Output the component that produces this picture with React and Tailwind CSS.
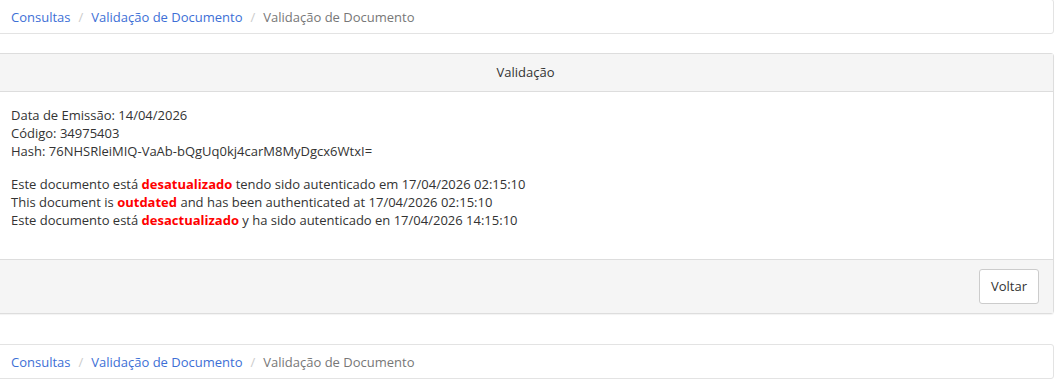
const crumbs = (
  <ol className="flex items-center text-[13px] leading-[18px]">
    <li>
      <a href="#" className="text-[#3d6fd6]">Consultas</a>
    </li>
    <li className="px-[8px] text-[#ccc]">/</li>
    <li>
      <a href="#" className="text-[#3d6fd6]">Validação de Documento</a>
    </li>
    <li className="px-[8px] text-[#ccc]">/</li>
    <li className="text-[#777]">Validação de Documento</li>
  </ol>
);

function Breadcrumb({ className }) {
  return (
    <div
      className={`border border-[#e3e3e3] rounded-[3px] bg-white pr-[12px] h-[35px] flex items-center ${className}`}
    >
      {crumbs}
    </div>
  );
}

export default function App() {
  return (
    <div
      className="bg-white text-[#333] min-h-[385px] ml-[-3px] mr-[7px]"
      style={{ fontFamily: '"Open Sans", "Liberation Sans", sans-serif' }}
    >
      <Breadcrumb className="mt-[-1px] pl-[13px]" />

      <div className="mt-[19px] border border-[#ddd] rounded-[3px] shadow-[0_1px_1px_rgba(0,0,0,0.05)]">
        <div className="bg-[#f5f5f5] border-b border-[#ddd] h-[38px] flex items-center justify-center text-[13px]">
          Validação
        </div>
        <div className="pl-[13px] pt-[14px] pb-[30px] text-[13px] leading-[18px]">
          <p>Data de Emissão: 14/04/2026</p>
          <p>Código: 34975403</p>
          <p>Hash: 76NHSRleiMIQ-VaAb-bQgUq0kj4carM8MyDgcx6WtxI=</p>
          <div className="mt-[15px]">
            <p>
              Este documento está{' '}
              <b className="text-[#ff0000] font-bold">desatualizado</b> tendo
              sido autenticado em 17/04/2026 02:15:10
            </p>
            <p>
              This document is <b className="text-[#ff0000] font-bold">outdated</b>{' '}
              and has been authenticated at 17/04/2026 02:15:10
            </p>
            <p>
              Este documento está{' '}
              <b className="text-[#ff0000] font-bold">desactualizado</b> y ha sido
              autenticado en 17/04/2026 14:15:10
            </p>
          </div>
        </div>
        <div className="bg-[#f5f5f5] border-t border-[#ddd] px-[14px] py-[9px] flex justify-end">
          <button className="h-[35px] px-[11px] bg-white border border-[#ccc] rounded-[3px] text-[13px] text-[#333]">
            Voltar
          </button>
        </div>
      </div>

      <Breadcrumb className="mt-[30px] pl-[13px]" />
    </div>
  );
}
